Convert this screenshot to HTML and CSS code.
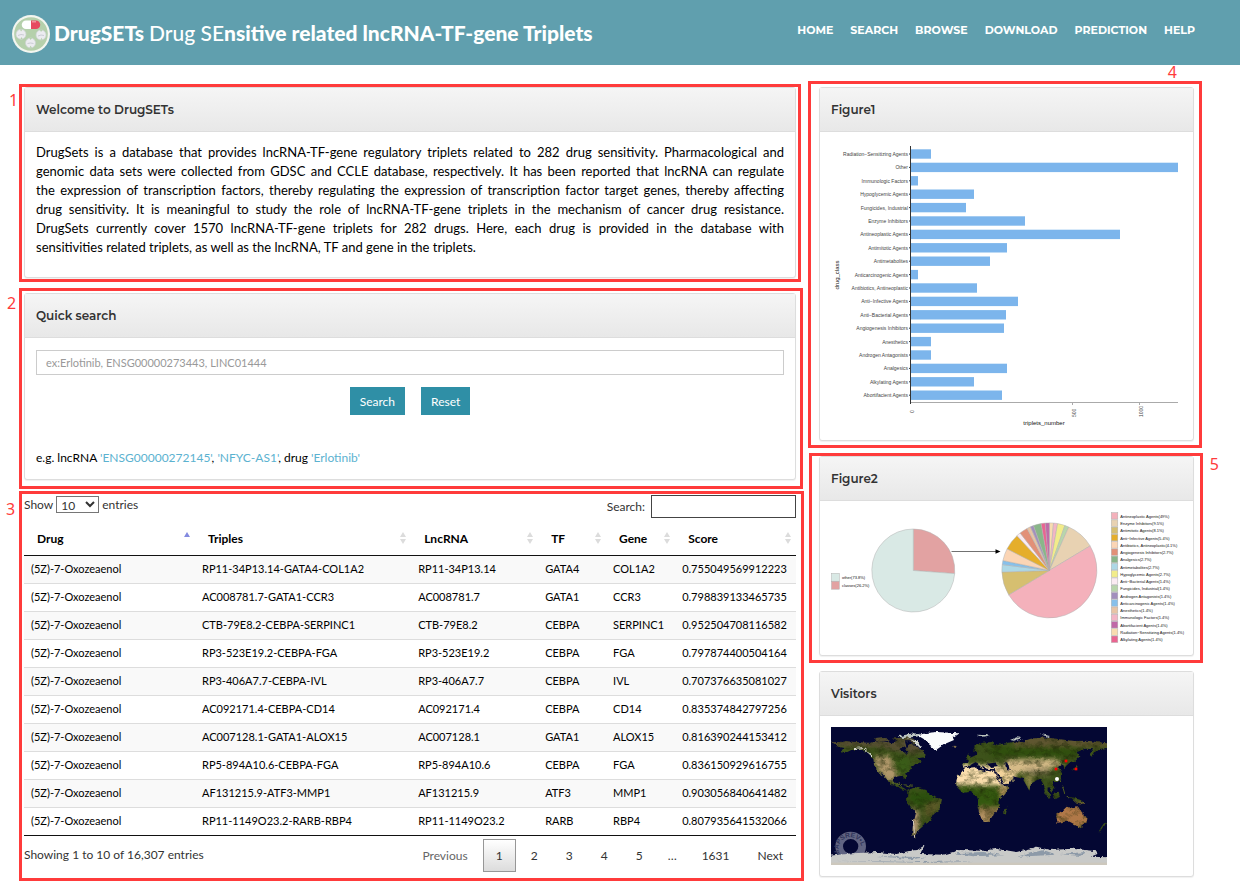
FILE: index.html
```html
<!DOCTYPE html>
<html lang="en">
<head>
<meta charset="utf-8">
<meta name="viewport" content="width=device-width, initial-scale=1">
<title>DrugSETs</title>
<link rel="stylesheet" href="styles.css">
</head>
<body>
<header class="topbar">
  <div class="brand">
    <svg class="brand-logo" viewBox="0 0 38 38" aria-hidden="true">
      <circle cx="19" cy="19" r="19" fill="#f3f6f0"/>
      <circle cx="19" cy="19" r="16.8" fill="#b5d0ab"/>
      <g>
        <path d="M14 5.5h5v8.500h-5a4.200 4.200 0 0 1 0-8.500z" fill="#fff"/>
        <path d="M19 5.500h5a4.200 4.200 0 0 1 0 8.500h-5z" fill="#e6495f"/>
        <path d="M20 6.800h4" stroke="#f7a3ae" stroke-width="1.2"/>
      </g>
      <g fill="#ececf0" stroke="#cdd2d2" stroke-width=".7">
        <circle cx="9" cy="19.3" r="5"/><circle cx="29" cy="20" r="5"/><circle cx="18.5" cy="28" r="5"/>
      </g>
      <g fill="#b5d0ab">
        <path d="M8 14.500l1 2 1.500-2zM8.500 24l1-2 1 2zM28 15l1 2 1.500-2zM28.500 24.800l1-2 1 2zM17.500 23l1 2 1.500-2zM17.500 32.800l1-2 1.500 2z"/>
      </g>
      <g fill="none" stroke="#bcbfc8" stroke-width=".7">
        <path d="M6 20.500l3-1 3 .5M26 21l3-1 3 .5M15.500 28.500l3-.5 3 .5"/>
      </g>
    </svg>
    <h1 class="brand-name">DrugSETs <span class="brand-light">Drug SE</span>nsitive related lncRNA-TF-gene Triplets</h1>
  </div>
  <nav class="nav">
    <a href="#">Home</a><a href="#">Search</a><a href="#">Browse</a><a href="#">Download</a><a href="#">Prediction</a><a href="#">Help</a>
  </nav>
</header>

<main class="layout">
  <div class="column">
    <section class="block">
      <div class="panel">
        <h2 class="panel-head">Welcome to DrugSETs</h2>
        <div class="panel-body intro">
          <p>
            <span>DrugSets is a database that provides lncRNA-TF-gene regulatory triplets related to 282 drug sensitivity. Pharmacological and</span>
            <span>genomic data sets were collected from GDSC and CCLE database, respectively. It has been reported that lncRNA can regulate</span>
            <span>the expression of transcription factors, thereby regulating the expression of transcription factor target genes, thereby affecting</span>
            <span>drug sensitivity. It is meaningful to study the role of lncRNA-TF-gene triplets in the mechanism of cancer drug resistance.</span>
            <span>DrugSets currently cover 1570 lncRNA-TF-gene triplets for 282 drugs. Here, each drug is provided in the database with</span>
            <span>sensitivities related triplets, as well as the lncRNA, TF and gene in the triplets.</span>
          </p>
        </div>
      </div>
      <div class="callout callout-welcome"><span>1</span></div>
    </section>

    <section class="block">
      <div class="panel">
        <h2 class="panel-head">Quick search</h2>
        <form class="panel-body quick">
          <input class="quick-input" type="text" aria-label="Quick search" placeholder="ex:Erlotinib, ENSG00000273443, LINC01444">
          <div class="quick-actions">
            <button type="button">Search</button>
            <button type="reset">Reset</button>
          </div>
          <p class="examples">e.g. lncRNA <a href="#">'ENSG00000272145'</a>, <a href="#">'NFYC-AS1'</a>, drug <a href="#">'Erlotinib'</a></p>
        </form>
      </div>
      <div class="callout callout-search"><span>2</span></div>
    </section>

    <section class="block">
      <div class="table-tools">
        <label class="length">Show
          <select><option>10</option><option>25</option><option>50</option><option>100</option></select>
          entries</label>
        <label class="filter">Search: <input type="search"></label>
      </div>
      <table class="data">
        <colgroup><col class="c-drug"><col class="c-triples"><col class="c-lnc"><col class="c-tf"><col class="c-gene"><col class="c-score"></colgroup>
        <thead>
          <tr><th class="asc">Drug</th><th>Triples</th><th>LncRNA</th><th>TF</th><th>Gene</th><th>Score</th></tr>
        </thead>
        <tbody>
          <tr><td>(5Z)-7-Oxozeaenol</td><td>RP11-34P13.14-GATA4-COL1A2</td><td>RP11-34P13.14</td><td>GATA4</td><td>COL1A2</td><td>0.755049569912223</td></tr>
          <tr><td>(5Z)-7-Oxozeaenol</td><td>AC008781.7-GATA1-CCR3</td><td>AC008781.7</td><td>GATA1</td><td>CCR3</td><td>0.798839133465735</td></tr>
          <tr><td>(5Z)-7-Oxozeaenol</td><td>CTB-79E8.2-CEBPA-SERPINC1</td><td>CTB-79E8.2</td><td>CEBPA</td><td>SERPINC1</td><td>0.952504708116582</td></tr>
          <tr><td>(5Z)-7-Oxozeaenol</td><td>RP3-523E19.2-CEBPA-FGA</td><td>RP3-523E19.2</td><td>CEBPA</td><td>FGA</td><td>0.797874400504164</td></tr>
          <tr><td>(5Z)-7-Oxozeaenol</td><td>RP3-406A7.7-CEBPA-IVL</td><td>RP3-406A7.7</td><td>CEBPA</td><td>IVL</td><td>0.707376635081027</td></tr>
          <tr><td>(5Z)-7-Oxozeaenol</td><td>AC092171.4-CEBPA-CD14</td><td>AC092171.4</td><td>CEBPA</td><td>CD14</td><td>0.835374842797256</td></tr>
          <tr><td>(5Z)-7-Oxozeaenol</td><td>AC007128.1-GATA1-ALOX15</td><td>AC007128.1</td><td>GATA1</td><td>ALOX15</td><td>0.816390244153412</td></tr>
          <tr><td>(5Z)-7-Oxozeaenol</td><td>RP5-894A10.6-CEBPA-FGA</td><td>RP5-894A10.6</td><td>CEBPA</td><td>FGA</td><td>0.836150929616755</td></tr>
          <tr><td>(5Z)-7-Oxozeaenol</td><td>AF131215.9-ATF3-MMP1</td><td>AF131215.9</td><td>ATF3</td><td>MMP1</td><td>0.903056840641482</td></tr>
          <tr><td>(5Z)-7-Oxozeaenol</td><td>RP11-1149O23.2-RARB-RBP4</td><td>RP11-1149O23.2</td><td>RARB</td><td>RBP4</td><td>0.807935641532066</td></tr>
        </tbody>
      </table>
      <div class="table-foot">
        <div class="info">Showing 1 to 10 of 16,307 entries</div>
        <div class="pager">
          <button type="button" class="muted">Previous</button>
          <button type="button" class="current">1</button>
          <button type="button">2</button>
          <button type="button">3</button>
          <button type="button">4</button>
          <button type="button">5</button>
          <span>…</span>
          <button type="button">1631</button>
          <button type="button">Next</button>
        </div>
      </div>
      <div class="callout callout-table"><span>3</span></div>
    </section>
  </div>

  <div class="column">
    <section class="block">
      <div class="panel">
        <h2 class="panel-head">Figure1</h2>
        <div class="panel-body figure">
          <svg id="bar-chart" class="chart" viewBox="831 143 351 286" role="img" aria-label="Triplets number by drug class"></svg>
        </div>
      </div>
      <div class="callout callout-fig1"><span>4</span></div>
    </section>

    <section class="block">
      <div class="panel">
        <h2 class="panel-head">Figure2</h2>
        <div class="panel-body figure">
          <svg id="pie-chart" class="chart" viewBox="831 512 351 132" role="img" aria-label="Share of drug classes"></svg>
        </div>
      </div>
      <div class="callout callout-fig2"><span>5</span></div>
    </section>

    <section class="block">
      <div class="panel">
        <h2 class="panel-head">Visitors</h2>
        <div class="panel-body figure">
          <svg class="map" viewBox="63 201 828 414" role="img" aria-label="World map of visitors">
            <defs>
              <filter id="terrain" x="0" y="0" width="1" height="1" color-interpolation-filters="sRGB">
                <feTurbulence type="fractalNoise" baseFrequency=".04 .06" numOctaves="4" seed="7" result="n"/>
                <feColorMatrix in="n" type="matrix" values="0 0 0 0 .12  0 0 0 0 .16  0 0 0 0 .03  1.600 0 0 0 -.700" result="dark"/>
                <feComposite in="dark" in2="SourceAlpha" operator="in" result="d"/>
                <feMerge><feMergeNode in="SourceGraphic"/><feMergeNode in="d"/></feMerge>
              </filter>
              <filter id="coast" x="-.1" y="-.1" width="1.200" height="1.200" color-interpolation-filters="sRGB">
                <feTurbulence type="fractalNoise" baseFrequency=".08" numOctaves="3" seed="3"/>
                <feDisplacementMap in="SourceGraphic" scale="12" xChannelSelector="R" yChannelSelector="G"/>
              </filter>
              <filter id="soft" color-interpolation-filters="sRGB"><feGaussianBlur stdDeviation="6"/></filter>
              <clipPath id="land">
                <path d="M66 247L92 246 108 243 145 247 180 248 210 243 250 250 262 240 285 245 290 262 305 250 325 262 348 282 344 292 322 295 334 304 306 318 302 328 286 342 291 360 285 358 278 347 256 350 248 362 256 371 268 366 266 378 282 384 292 392 276 388 258 378 238 368 225 352 212 334 218 350 204 332 193 318 190 298 176 280 150 268 124 270 100 282 94 270 106 265 86 260z"/>
                <path d="M292 392L315 381 346 390 360 406 396 421 390 448 372 462 356 486 340 498 326 510 318 524 320 533 306 526 308 500 318 458 300 438 291 420z"/>
                <path d="M442 352L464 325 498 321 502 330 524 336 530 332 552 336 560 352 577 381 596 382 586 402 568 420 570 444 554 458 546 474 536 486 518 486 510 466 503 440 505 420 497 402 480 396 458 398 440 380 438 366z"/>
                <path d="M456 308L474 310 472 302 484 292 500 284 498 274 490 272 492 260 518 248 545 246 560 255 590 250 610 245 640 244 662 236 700 232 752 238 790 243 830 242 891 250 891 264 862 268 846 290 838 284 850 268 828 266 800 276 808 290 794 305 778 309 768 318 762 330 756 312 745 320 756 340 756 356 742 366 728 366 736 382 726 396 714 380 712 390 722 412 708 398 702 376 690 356 680 362 664 370 658 392 648 374 638 356 614 350 604 348 614 360 596 374 578 382 566 356 556 340 556 328 530 326 516 316 520 328 510 322 498 306 486 312 474 320 460 323z"/>
                <path d="M738 464L760 450 770 440 790 444 802 438 812 456 830 472 826 492 812 505 796 494 776 484 742 488z"/>
                <path d="M580 448L592 440 588 462 580 467z"/>
                <path d="M700 390L722 414 716 416zM728 404L746 394 750 410 736 418zM780 410L812 420 826 432 800 428zM804 305L802 322 786 330 800 316z"/>
                <path d="M468 292L476 280 482 294 474 302zM872 504L882 490 888 488 878 508 866 515z"/>
                <path d="M245 236L300 230 330 250 318 256 298 244 262 244zM196 234l30-4 10 12-38 2z"/>
              </clipPath>
            </defs>
            <rect x="63" y="201" width="828" height="414" fill="#040733"/>
            <g filter="url(#coast)">
              <g clip-path="url(#land)">
                <g filter="url(#terrain)">
                  <rect x="63" y="201" width="828" height="414" fill="#3d521a"/>
                  <g filter="url(#soft)">
                    <path d="M60 225H370V272L300 282 210 262 60 260z" fill="#574f33"/>
                    <path d="M196 288H240L256 330 270 366 228 360 190 310z" fill="#b0976a"/>
                    <path d="M256 290H300V340H262z" fill="#3a5c18"/>
                    <path d="M300 395H372V430L330 440 300 425z" fill="#2c500e"/>
                    <path d="M310 440L328 460 322 535 302 530z" fill="#b99a75"/>
                    <path d="M345 430L400 420 370 470 340 470z" fill="#5c5a28"/>
                    <path d="M430 315H570L584 376H430z" fill="#fbdfae"/>
                    <path d="M434 383H570V440H500z" fill="#34580f"/>
                    <path d="M500 440H580L550 495H500z" fill="#8d7447"/>
                    <path d="M510 450L528 470 525 490H510z" fill="#c6a06f"/>
                    <path d="M565 385H600L575 420z" fill="#b48e5a"/>
                    <path d="M552 320L610 325 620 365 578 388z" fill="#f2d29a"/>
                    <path d="M590 298H740L760 316 715 325 650 335 600 345 580 320z" fill="#d6bb88"/>
                    <path d="M640 328H720V346H660z" fill="#8a7d58"/>
                    <path d="M610 225H895V262H610z" fill="#5f5630"/>
                    <path d="M540 262H800V288H540z" fill="#304f0e"/>
                    <path d="M730 430H835V500H730z" fill="#b07848"/>
                    <path d="M640 345L672 350 658 396z" fill="#948b4c"/>
                  </g>
                </g>
              </g>
              <path d="M322 226L350 219 380 216 446 220 428 232 432 240 404 252 392 260 378 270 364 264 356 246 336 234z" fill="#fafcfc"/>
              <path d="M266 229L310 220 334 222 318 230 278 234zM502 224l38 2-22 4zM600 240l20-8 16 2-24 8zM690 222l30 6-6 3z" fill="#bdc5c0"/>
              <path d="M290 236l30 8 16 16-8 2-20-18z" fill="#d8dcd6"/>
              <path d="M132 266L158 263 186 288" fill="none" stroke="#e2e2dc" stroke-width="3"/>
              <path d="M428 257l16 1-8 6-10-2z" fill="#806f4a"/>
              <path d="M556 336L572 356 582 376 592 374 610 362" fill="none" stroke="#040733" stroke-width="5"/>
              <path d="M585 306l10 6 4 18-6 2z" fill="#040733"/>
              <path d="M530 311l24-3 10 10-22 3z" fill="#040733"/>
              <path d="M268 266l20-4 8 18-12 1z" fill="#040733"/>
              <path d="M310 480L314 530" stroke="#d8cec0" stroke-width="3"/>
              <path d="M756 376l5 14 4 14M750 360l2 6M270 373l18 2 20 4M770 412l12 2" fill="none" stroke="#53601f" stroke-width="3"/>
            </g>
            <g fill="#aeb1c2" opacity=".55">
              <path fill-rule="evenodd" d="M76 559a46 44 0 1 1 92 0a46 44 0 1 1-92 0zM99 559a23 22 0 1 0 46 0a23 22 0 1 0-46 0z"/>
            </g>
            <path id="ring" d="M92 583A34 33 0 1 1 153 574" fill="none"/>
            <text class="map-mark"><textPath href="#ring">MAPSREV•L</textPath></text>
            <g filter="url(#coast)">
              <path d="M50 588L130 580 200 576 260 582 300 572 322 570 344 556 330 582 400 584 450 570 520 572 560 566 620 576 680 560 720 570 790 566 860 574 862 582 842 590 900 592V640H50z" fill="#c9cac8"/>
              <path d="M200 588L350 592 300 598zM430 580l90-4 60 10-90 3zM620 590l80-20 40 14zM750 582l80-6-20 12zM70 602l260 4 160-2-120 6z" fill="#8d9aa8"/>
            </g>
            <rect x="63" y="608" width="828" height="7" fill="#cdc8bd"/>
            <g fill="#f00"><rect x="764" y="299" width="8" height="8"/><rect x="734" y="323" width="8" height="8"/><rect x="794" y="323" width="8" height="8"/></g>
            <circle cx="741" cy="357" r="6" fill="#fff"/>
          </svg>
        </div>
      </div>
    </section>
  </div>
</main>
<script src="charts.js"></script>
</body>
</html>
```
FILE: styles.css
```css
* { box-sizing: border-box; }

body {
  margin: 0;
  background: #fff;
  color: #000;
  font-family: Lato, "Liberation Sans", sans-serif;
  font-size: 12px;
  line-height: 16px;
}

h1, h2, p { margin: 0; }
a { text-decoration: none; }
button, input, select { font-family: inherit; border-radius: 0; }

/* Header */
.topbar {
  display: flex;
  align-items: center;
  justify-content: space-between;
  min-height: 65px;
  padding: 0 45px 0 12px;
  background: #609fae;
  color: #fff;
}
.brand { display: flex; align-items: center; gap: 4px; }
.brand-logo { width: 38px; height: 38px; margin-top: 3px; }
.brand-name { font-size: 21px; line-height: 28px; font-weight: 900; }
.brand-light { font-weight: 500; }
.nav { display: flex; gap: 17px; padding-bottom: 5px; }
.nav a {
  color: #fff;
  font: 700 11px/16px Montserrat, Inter, sans-serif;
  text-transform: uppercase;
}

/* Page grid */
.layout {
  display: grid;
  grid-template-columns: minmax(0, 772fr) minmax(0, 375fr);
  gap: 23px;
  align-items: start;
  padding: 22px 46px 18px 24px;
}
.column { display: flex; flex-direction: column; gap: 15px; }
.block { position: relative; }

/* Panels */
.panel {
  border: 1px solid #ddd;
  border-radius: 3px;
  box-shadow: 0 1px 1px rgba(0, 0, 0, .06);
  background: #fff;
}
.panel-head {
  padding: 14px 11px 13px;
  border-bottom: 1px solid #ddd;
  background: linear-gradient(#f5f5f5, #e8e8e8);
  color: #333;
  font: 600 12px/16px Montserrat, Inter, sans-serif;
}
.panel-body { padding: 11px; }
.intro { padding-bottom: 20px; font-size: 13px; line-height: 19px; text-align: justify; }
@media (min-width: 1230px) {
  .intro span { display: block; text-align-last: justify; }
  .intro span:last-child { text-align-last: left; }
}
.figure svg { display: block; }
.chart { width: 100%; height: auto; overflow: visible; }
.map { width: 276px; max-width: 100%; height: auto; }

/* Quick search */
.quick { padding-top: 12px; padding-bottom: 10px; }
.quick-input {
  display: block;
  width: 100%;
  height: 25px;
  padding: 0 9px;
  border: 1px solid #ccc;
  color: #555;
  font-size: 11px;
}
.quick-input::placeholder { color: #999; opacity: 1; }
.quick-actions { display: flex; justify-content: center; gap: 16px; margin: 12px 0 35px; }
.quick-actions button {
  height: 28px;
  padding: 0 10px;
  border: 0;
  background: #2f8fa6;
  color: #fff;
  font-size: 12px;
}
.examples { padding-bottom: 3px; }
.examples a { color: #5bb2d0; }

/* Results table */
.table-tools { display: flex; justify-content: space-between; color: #333; font-size: 12px; }
.length, .filter { display: flex; align-items: center; }
.length { align-self: flex-start; gap: 3px; height: 19px; }
.length select {
  width: 43px;
  height: 17px;
  padding: 0;
  border: 1px solid #767676;
  background: #fff;
  color: #333;
  font-size: 12px;
}
.filter { gap: 6px; }
.filter input { width: 145px; height: 23px; border: 1px solid #444; background: #fff; }

.data { width: 100%; border-collapse: collapse; table-layout: fixed; border-bottom: 1px solid #111; }
.c-drug { width: 22.150%; }
.c-triples { width: 28%; }
.c-lnc { width: 16.450%; }
.c-tf { width: 8.800%; }
.c-gene { width: 8.950%; }
.c-score { width: 15.650%; }
.data th {
  height: 37px;
  padding: 5px 18px 0 13px;
  border-bottom: 1px solid #111;
  background: url("data:image/svg+xml,%3Csvg xmlns='http://www.w3.org/2000/svg' width='8' height='12'%3E%3Cpath d='M1 5L4 0L7 5zM1 7h6L4 12z' fill='%23dcdcdc'/%3E%3C/svg%3E") no-repeat right 4px top 14px;
  font-size: 12px;
  font-weight: 700;
  text-align: left;
}
.data th.asc {
  background-image: url("data:image/svg+xml,%3Csvg xmlns='http://www.w3.org/2000/svg' width='8' height='12'%3E%3Cpath d='M1 5L4 0L7 5z' fill='%23838ae0'/%3E%3C/svg%3E");
}
.data td { height: 28px; padding: 0 0 0 7px; border-top: 1px solid #ddd; font-size: 11px; white-space: nowrap; }
.data tbody tr:first-child td { border-top: 0; }
.data tbody tr:nth-child(odd) { background: #f9f9f9; }

.table-foot { display: flex; justify-content: space-between; padding-top: 3px; color: #333; font-size: 12px; }
.info { padding-top: 8px; }
.pager { display: flex; align-items: center; gap: 2px; }
.pager button, .pager span {
  min-width: 33px;
  height: 33px;
  padding: 0 12px;
  border: 1px solid transparent;
  background: none;
  color: #333;
  font-size: 12px;
  line-height: 31px;
  text-align: center;
}
.pager span { min-width: 0; padding: 0 9px; }
.pager .muted { color: #666; }
.pager .current { border-color: #979797; background: linear-gradient(#fff, #dcdcdc); }

/* Numbered callouts drawn over the page */
.callout { position: absolute; border: 3px solid #ff3b3b; pointer-events: none; }
.callout span { position: absolute; color: #ff3b3b; font: 400 16px/16px "Noto Sans", sans-serif; }
.callout-welcome { inset: -3px -5px -4px; }
.callout-welcome span { left: -13px; top: 5px; }
.callout-search { inset: -5px -7px -9px -5px; }
.callout-search span { left: -15px; top: 4px; }
.callout-table { inset: -4px -8px -9px -5px; }
.callout-table span { left: -16px; top: 7px; }
.callout-fig1 { inset: -6px -8px -7px -11px; }
.callout-fig1 span { right: 22px; top: -20px; }
.callout-fig2 { inset: -3px -9px -7px -10px; }
.callout-fig2 span { right: -19px; top: 0; }

/* Charts */
.chart text { font-family: "Liberation Sans", sans-serif; font-size: 5px; fill: #444; }
.chart .axis-title { font-size: 6px; fill: #111; }
.chart .legend { font-size: 4px; fill: #111; }
.chart .bar { fill: #7cb5ec; }
.chart .axis { stroke: #333; stroke-width: 1; fill: none; }
.chart .axis-light { stroke: #aaa; stroke-width: 1; fill: none; }
.chart .arrow { stroke: #333; stroke-width: .7; }
.chart .slice { stroke: #b0b0b0; stroke-width: .5; }
.map-mark { font: 700 20px "Liberation Sans", sans-serif; fill: #30345a; }
```
FILE: charts.js
```js
const NS = "http://www.w3.org/2000/svg";

function add(parent, name, attrs, text) {
  const node = document.createElementNS(NS, name);
  for (const key in attrs) node.setAttribute(key, attrs[key]);
  if (text) node.textContent = text;
  parent.appendChild(node);
  return node;
}

// Bar lengths are in chart units from the axis.
const bars = [
  ["Radiation−Sensitizing Agents", 20], ["Other", 267], ["Immunologic Factors", 7],
  ["Hypoglycemic Agents", 63], ["Fungicides, Industrial", 55], ["Enzyme Inhibitors", 114],
  ["Antineoplastic Agents", 209], ["Antimitotic Agents", 96], ["Antimetabolites", 79],
  ["Anticarcinogenic Agents", 7], ["Antibiotics, Antineoplastic", 66], ["Anti−Infective Agents", 107],
  ["Anti−Bacterial Agents", 95], ["Angiogenesis Inhibitors", 93], ["Anesthetics", 20],
  ["Androgen Antagonists", 20], ["Analgesics", 96], ["Alkylating Agents", 63],
  ["Abortifacient Agents", 91]
];
const chart = document.getElementById("bar-chart");
bars.forEach(([label, length], i) => {
  const y = 154 + i * 13.4;
  add(chart, "rect", { class: "bar", x: 911, y: y - 4.7, width: length, height: 9.4 });
  add(chart, "text", { x: 908, y: y + 2, "text-anchor": "end" }, label);
  add(chart, "path", { class: "axis", d: `M909 ${y}h2` });
});
add(chart, "path", { class: "axis-light", d: "M911 402.500H1178M1072.500 402v3M1139.500 402v3" });
add(chart, "path", { class: "axis", d: "M910.500 146V404" });
[["0", 914], ["500", 1076], ["1000", 1143]].forEach(([label, x]) => {
  add(chart, "text", { transform: `translate(${x} ${label === "0" ? 413 : 417}) rotate(-90)` }, label);
});
add(chart, "text", { class: "axis-title", x: 1044, y: 425, "text-anchor": "middle" }, "triplets_number");
add(chart, "text", { class: "axis-title", transform: "translate(839 275) rotate(-90)", "text-anchor": "middle" }, "drug_class");

const pies = document.getElementById("pie-chart");
function drawPie(cx, cy, r, slices) {
  let from = 0;
  slices.forEach(([to, fill]) => {
    const point = (deg) => {
      const a = deg * Math.PI / 180;
      return `${cx + r * Math.sin(a)} ${cy - r * Math.cos(a)}`;
    };
    const large = to - from > 180 ? 1 : 0;
    add(pies, "path", { class: "slice", fill, d: `M${cx} ${cy}L${point(from)}A${r} ${r} 0 ${large} 1 ${point(to)}Z` });
    from = to;
  });
}
drawPie(913.3, 570.5, 41.5, [[94.3, "#e2a2a2"], [360, "#d9e9e5"]]);
drawPie(1049.4, 570.4, 47.5, [
  [5, "#f8dcb0"], [10, "#f3b5c5"], [19, "#f2ec8a"], [24, "#b8d6ab"], [59, "#e8d2b2"],
  [239, "#f4b1bb"], [268, "#d6bf70"], [277, "#add8e6"], [282, "#87c0ea"], [297, "#fbd5b5"],
  [317, "#e5ae2b"], [322, "#fbebf2"], [332, "#e29078"], [336.5, "#e8c4a5"], [340.5, "#a28fbd"],
  [350, "#89b689"], [355, "#ea6491"], [360, "#c069a8"]
]);
add(pies, "path", { class: "arrow", d: "M951.500 551.500H997" });
add(pies, "path", { fill: "#000", d: "M995.500 549.200L1000.500 551.500L995.500 553.800z" });

const swatch = (x, y, size, fill) =>
  add(pies, "rect", { class: "slice", x, y, width: size, height: size, fill });
[["other(73.8%)", "#d9e9e5"], ["classes(26.2%)", "#e2a2a2"]].forEach(([label, fill], i) => {
  swatch(831.5, 573.4 + i * 8, 7.8, fill);
  add(pies, "text", { class: "legend", x: 842, y: 578.8 + i * 8 }, label);
});
[
  ["Antineoplastic Agents(49%)", "#f4b1bb"], ["Enzyme Inhibitors(9.5%)", "#e8d2b2"],
  ["Antimitotic Agents(8.1%)", "#d6bf70"], ["Anti−Infective Agents(5.4%)", "#e5ae2b"],
  ["Antibiotics, Antineoplastic(4.1%)", "#fbd5b5"], ["Angiogenesis Inhibitors(2.7%)", "#e29078"],
  ["Analgesics(2.7%)", "#89b689"], ["Antimetabolites(2.7%)", "#add8e6"],
  ["Hypoglycemic Agents(2.7%)", "#f2ec8a"], ["Anti−Bacterial Agents(1.4%)", "#fbebf2"],
  ["Fungicides, Industrial(1.4%)", "#b8d6ab"], ["Androgen Antagonists(1.4%)", "#a28fbd"],
  ["Anticarcinogenic Agents(1.4%)", "#87c0ea"], ["Anesthetics(1.4%)", "#e8c4a5"],
  ["Immunologic Factors(1.4%)", "#f3b5c5"], ["Abortifacient Agents(1.4%)", "#c069a8"],
  ["Radiation−Sensitizing Agents(1.4%)", "#f8dcb0"], ["Alkylating Agents(1.4%)", "#ea6491"]
].forEach(([label, fill], i) => {
  const y = 512.6 + i * 7.26;
  swatch(1111.3, y, 6.5, fill);
  add(pies, "text", { class: "legend", x: 1120.3, y: y + 5.2 }, label);
});
```
